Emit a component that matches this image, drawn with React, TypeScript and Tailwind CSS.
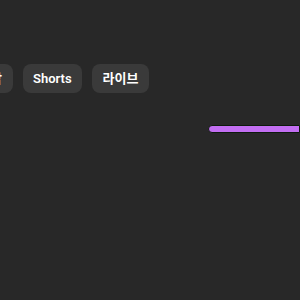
export default function App() {
  return (
    <div className="h-[300px] w-[300px] overflow-hidden bg-[#282828] font-['Roboto','Noto_Sans_CJK_KR',sans-serif]">
      <div className="flex items-center gap-[10px] pt-[64px]">
        <div className="flex w-[13px] shrink-0 justify-end overflow-hidden">
          <div className="flex h-[29px] shrink-0 items-center rounded-lg bg-[#3a3a3a] px-[11px] text-[13px] font-semibold text-white">
            음악
          </div>
        </div>
        <div className="flex h-[29px] shrink-0 items-center rounded-lg bg-[#3a3a3a] px-[10px] text-[13px] font-semibold text-white">
          Shorts
        </div>
        <div className="flex h-[29px] shrink-0 items-center rounded-lg bg-[#3a3a3a] px-[11px] text-[13px] font-semibold text-white">
          라이브
        </div>
      </div>
      <div className="mt-[32px] flex justify-end">
        <div className="h-[8px] w-[92px] rounded-l-full border border-[#0e1a0e] bg-[#c26ef2]" />
      </div>
    </div>
  );
}
